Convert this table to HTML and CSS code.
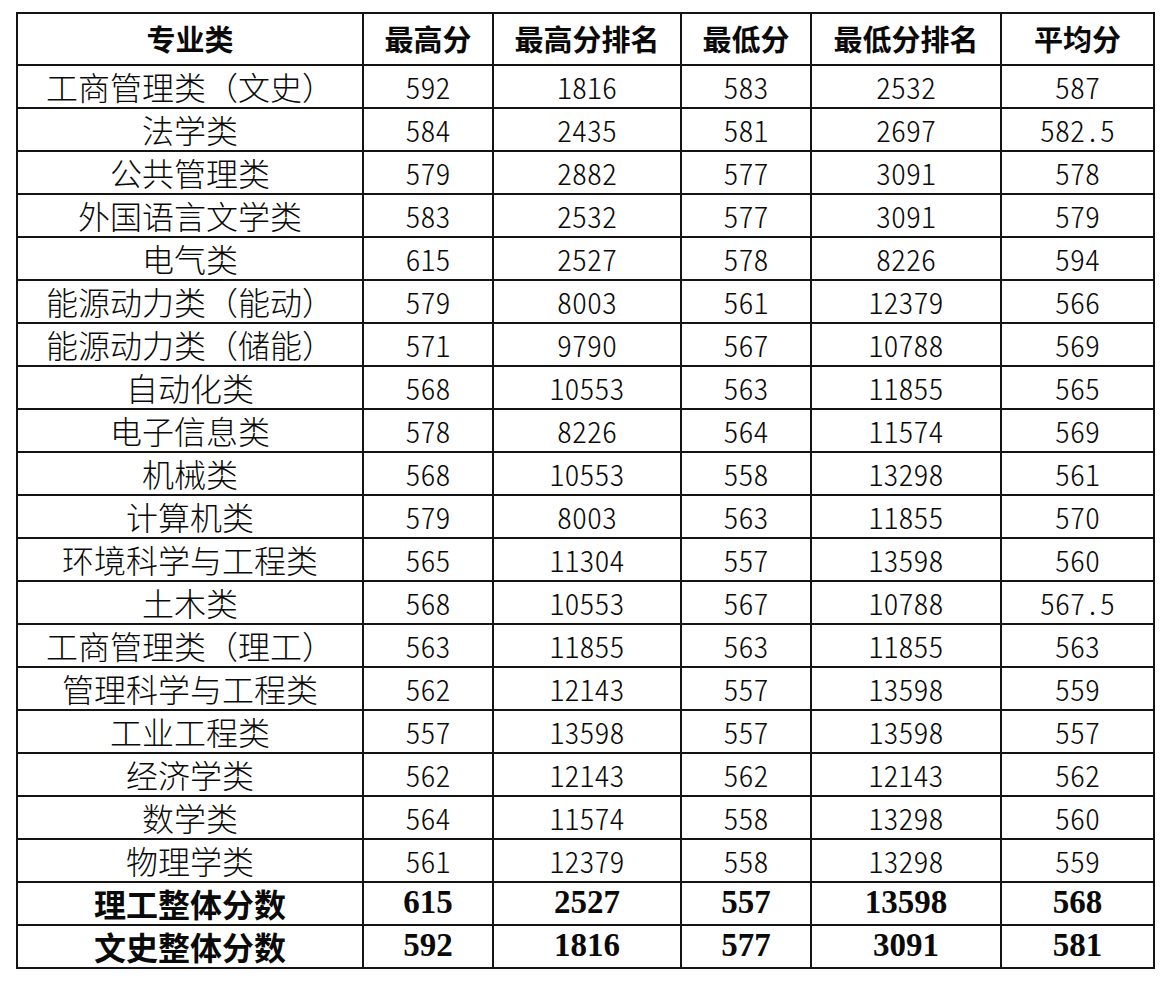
FILE: index.html
```html
<!DOCTYPE html>
<html lang="zh-CN">
<head>
<meta charset="utf-8">
<title>专业类分数</title>
<link rel="stylesheet" href="styles.css">
</head>
<body>
<table class="scores">
  <colgroup>
    <col class="c-name"><col class="c-num"><col class="c-rank"><col class="c-num"><col class="c-rank2"><col class="c-avg">
  </colgroup>
  <thead>
    <tr><th>专业类</th><th>最高分</th><th>最高分排名</th><th>最低分</th><th>最低分排名</th><th>平均分</th></tr>
  </thead>
  <tbody>
    <tr><td>工商管理类（文史）</td><td>592</td><td>1816</td><td>583</td><td>2532</td><td>587</td></tr>
    <tr><td>法学类</td><td>584</td><td>2435</td><td>581</td><td>2697</td><td>582.5</td></tr>
    <tr><td>公共管理类</td><td>579</td><td>2882</td><td>577</td><td>3091</td><td>578</td></tr>
    <tr><td>外国语言文学类</td><td>583</td><td>2532</td><td>577</td><td>3091</td><td>579</td></tr>
    <tr><td>电气类</td><td>615</td><td>2527</td><td>578</td><td>8226</td><td>594</td></tr>
    <tr><td>能源动力类（能动）</td><td>579</td><td>8003</td><td>561</td><td>12379</td><td>566</td></tr>
    <tr><td>能源动力类（储能）</td><td>571</td><td>9790</td><td>567</td><td>10788</td><td>569</td></tr>
    <tr><td>自动化类</td><td>568</td><td>10553</td><td>563</td><td>11855</td><td>565</td></tr>
    <tr><td>电子信息类</td><td>578</td><td>8226</td><td>564</td><td>11574</td><td>569</td></tr>
    <tr><td>机械类</td><td>568</td><td>10553</td><td>558</td><td>13298</td><td>561</td></tr>
    <tr><td>计算机类</td><td>579</td><td>8003</td><td>563</td><td>11855</td><td>570</td></tr>
    <tr><td>环境科学与工程类</td><td>565</td><td>11304</td><td>557</td><td>13598</td><td>560</td></tr>
    <tr><td>土木类</td><td>568</td><td>10553</td><td>567</td><td>10788</td><td>567.5</td></tr>
    <tr><td>工商管理类（理工）</td><td>563</td><td>11855</td><td>563</td><td>11855</td><td>563</td></tr>
    <tr><td>管理科学与工程类</td><td>562</td><td>12143</td><td>557</td><td>13598</td><td>559</td></tr>
    <tr><td>工业工程类</td><td>557</td><td>13598</td><td>557</td><td>13598</td><td>557</td></tr>
    <tr><td>经济学类</td><td>562</td><td>12143</td><td>562</td><td>12143</td><td>562</td></tr>
    <tr><td>数学类</td><td>564</td><td>11574</td><td>558</td><td>13298</td><td>560</td></tr>
    <tr><td>物理学类</td><td>561</td><td>12379</td><td>558</td><td>13298</td><td>559</td></tr>
    <tr class="total"><td>理工整体分数</td><td>615</td><td>2527</td><td>557</td><td>13598</td><td>568</td></tr>
    <tr class="total"><td>文史整体分数</td><td>592</td><td>1816</td><td>577</td><td>3091</td><td>581</td></tr>
  </tbody>
</table>
</body>
</html>
```

FILE: styles.css
```css
html, body {
  margin: 0;
  padding: 0;
  background: #ffffff;
}

body {
  padding: 12px 0 0 16px;
}

.scores {
  border-collapse: collapse;
  table-layout: fixed;
  width: 1137px;
  color: #0a0a0a;
  font-family: "Noto Sans CJK SC", "Noto Sans", sans-serif;
}

.c-name { width: 346px; }
.c-num { width: 130px; }
.c-rank { width: 188px; }
.c-rank2 { width: 190px; }
.c-avg { width: 153px; }

.scores th,
.scores td {
  border: 2px solid #141414;
  padding: 0;
  text-align: center;
  vertical-align: middle;
  white-space: nowrap;
}

.scores th {
  height: 48px;
  padding-bottom: 2px;
  font-size: 29px;
  font-weight: 700;
  line-height: 1;
}

.scores td {
  height: 39px;
  padding-bottom: 2px;
  font-size: 32px;
  font-weight: 300;
  line-height: 1;
}

.scores td + td {
  font-size: 30px;
  font-feature-settings: "hwid" 1;
}

.scores .total td {
  font-size: 33px;
  font-weight: 700;
  font-family: "Liberation Serif", "Noto Sans CJK SC", serif;
  font-feature-settings: normal;
}

.scores .total td:first-child {
  font-family: "Noto Sans CJK SC", sans-serif;
  font-size: 32px;
}
```
